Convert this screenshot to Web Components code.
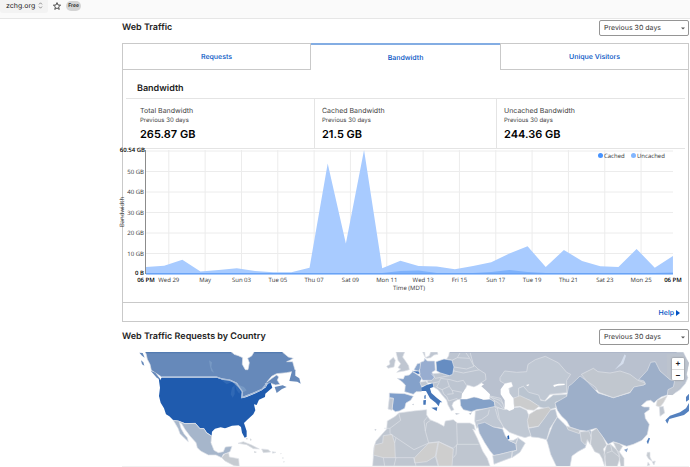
<!DOCTYPE html>
<html lang="en">
<head>
<meta charset="utf-8">
<title>Web Traffic</title>
<style>
	body {
		margin: 0;
		background: #fff;
		color: #222;
		font-family: Inter, "Liberation Sans", sans-serif;
		font-size: 7px;
		text-rendering: geometricPrecision;
	}
</style>
</head>
<body>
<zone-bar plan="Free">zchg.org</zone-bar>
<traffic-page>
	<section-head label="Traffic period">Web Traffic</section-head>
	<tab-panel>
		<tab-button slot="tabs">Requests</tab-button>
		<tab-button slot="tabs" active>Bandwidth</tab-button>
		<tab-button slot="tabs">Unique Visitors</tab-button>
		<stat-row heading="Bandwidth">
			<stat-cell value="265.87 GB">Total Bandwidth</stat-cell>
			<stat-cell value="21.5 GB">Cached Bandwidth</stat-cell>
			<stat-cell value="244.36 GB">Uncached Bandwidth</stat-cell>
		</stat-row>
		<bandwidth-chart></bandwidth-chart>
		<help-link slot="footer">Help</help-link>
	</tab-panel>
	<section-head label="Country period">Web Traffic Requests by Country</section-head>
	<country-map></country-map>
</traffic-page>

<script>
function define(name, html, setup) {
	const template = document.createElement('template')
	template.innerHTML = html

	customElements.define(name, class extends HTMLElement {
		constructor() {
			super()
			this.attachShadow({ mode: 'open' })
			this.shadowRoot.appendChild(template.content.cloneNode(true))
		}

		connectedCallback() {
			if (setup) setup(this, this.shadowRoot)
		}
	})
}

define('zone-bar', `
	<style>
		:host {
			display: flex;
			align-items: flex-start;
			height: 18px;
			background: #fafafa;
			border-bottom: 1px solid #e6e6e6;
		}
		button {
			display: flex;
			align-items: center;
			gap: 3px;
			height: 13px;
			padding: 0 5px 2px 6px;
			border: 0;
			border-radius: 0 0 3px 3px;
			background: #f3f3f3;
			color: #222;
			font: 7px/10px Inter, sans-serif;
			text-rendering: inherit;
		}
		.caret { width: 5px; height: 7px; }
		.star { width: 8px; height: 8px; margin: 2px 5px; }
		.plan {
			margin-top: 1px;
			padding: 0 2px;
			border-radius: 5px;
			background: #d4d4d4;
			font-size: 5px;
			font-weight: 600;
			line-height: 10px;
		}
	</style>
	<button type="button">
		<slot></slot>
		<svg class="caret" viewBox="0 0 5 7" fill="none" stroke="#777" stroke-width=".8"><path d="M1 2.4 2.5 .8 4 2.4M1 4.6 2.5 6.2 4 4.6"/></svg>
	</button>
	<svg class="star" viewBox="0 0 16 16" fill="none" stroke="#333" stroke-width="1.7" stroke-linejoin="round"><path d="M8 1.2 10 6l5.2.4-4 3.4 1.3 5L8 12l-4.5 2.8 1.3-5-4-3.4L6 6z"/></svg>
	<span class="plan"></span>
`, (host, root) => {
	root.querySelector('.plan').textContent = host.getAttribute('plan')
})

define('traffic-page', `
	<style>
		:host {
			display: block;
			margin: 0 1px 0 122px;
		}
	</style>
	<slot></slot>
`)

define('section-head', `
	<style>
		:host {
			display: flex;
			align-items: center;
			justify-content: space-between;
			padding: 1px 0 7px;
		}
		h2 {
			margin: 0;
			font-size: 9px;
			font-weight: 600;
			line-height: 12px;
		}
		.picker { display: grid; align-items: center; }
		select, svg { grid-area: 1 / 1; }
		select {
			appearance: none;
			width: 90px;
			height: 16px;
			padding: 0 4px;
			border: 1px solid #959595;
			border-radius: 2px;
			background: #fff;
			color: #333;
			font: 7px/14px Inter, sans-serif;
			text-rendering: inherit;
		}
		svg {
			justify-self: end;
			width: 4px;
			height: 3px;
			margin-right: 4px;
			pointer-events: none;
		}
	</style>
	<h2><slot></slot></h2>
	<div class="picker">
		<select><option>Previous 30 days</option></select>
		<svg viewBox="0 0 4 3" fill="#555"><path d="M0 .4h4L2 2.6z"/></svg>
	</div>
`, (host, root) => {
	root.querySelector('select').setAttribute('aria-label', host.getAttribute('label'))
})

define('tab-panel', `
	<style>
		:host {
			display: block;
			margin-bottom: 6px;
			border: 1px solid #c9c9c9;
			border-top: 0;
		}
		nav {
			display: grid;
			grid-template-columns: repeat(3, 1fr);
			margin: 0 -1px;
		}
		footer {
			display: flex;
			justify-content: flex-end;
			padding: 4px 8px 3px;
			border-top: 1px solid #c9c9c9;
		}
	</style>
	<nav><slot name="tabs"></slot></nav>
	<slot></slot>
	<footer><slot name="footer"></slot></footer>
`)

define('tab-button', `
	<style>
		:host { display: block; }
		button {
			box-sizing: border-box;
			width: 100%;
			height: 27px;
			border: 1px solid #c9c9c9;
			background: #fff;
			color: #0051c3;
			font: 500 7px/10px Inter, sans-serif;
			text-rendering: inherit;
		}
		:host([active]) button {
			border-width: 2px 0 0;
			border-top-color: #83ade3;
		}
	</style>
	<button type="button"><slot></slot></button>
`)

define('stat-row', `
	<style>
		:host { display: block; padding: 12px 3px 0; }
		h3 {
			margin: 0;
			padding: 0 11px 3px;
			font-size: 9px;
			font-weight: 600;
			line-height: 13px;
		}
		.cells {
			display: grid;
			grid-template-columns: 188fr 182fr 189fr;
			border: 1px solid #e4e4e4;
			border-width: 1px 0;
		}
	</style>
	<h3></h3>
	<div class="cells"><slot></slot></div>
`, (host, root) => {
	root.querySelector('h3').textContent = host.getAttribute('heading')
})

define('stat-cell', `
	<style>
		:host {
			display: block;
			padding: 7px 7px 6px;
			border-left: 1px solid #e4e4e4;
			color: #444;
		}
		:host(:first-child) { padding-left: 14px; border-left: 0; }
		p { margin: 0; line-height: 10px; }
		.period { font-size: 6px; }
		.value {
			color: #000;
			font-size: 11px;
			font-weight: 600;
			line-height: 16px;
		}
	</style>
	<p><slot></slot></p>
	<p class="period">Previous 30 days</p>
	<p class="value"></p>
`, (host, root) => {
	root.querySelector('.value').textContent = host.getAttribute('value')
})

define('help-link', `
	<style>
		:host { display: block; }
		a {
			display: flex;
			align-items: center;
			gap: 2px;
			color: #0051c3;
			font-size: 7px;
			font-weight: 500;
			line-height: 11px;
			text-decoration: none;
		}
		svg { width: 4px; height: 6px; }
	</style>
	<a href="#help"><slot></slot><svg viewBox="0 0 4 6" fill="#0051c3"><path d="M0 0 4 3 0 6z"/></svg></a>
`)

define('bandwidth-chart', `
	<style>
		:host { display: block; }
		svg { display: block; width: 100%; overflow: visible; }
		text {
			fill: #333;
			font: 6px "Open Sans", sans-serif;
			text-anchor: middle;
		}
		.y text { text-anchor: end; }
		.bold, .y .bold { fill: #000; font-weight: 600; }
		.legend text { text-anchor: start; }
	</style>
	<svg viewBox="123 149 565 153" role="img" aria-label="Bandwidth over time">
		<path class="grid" stroke="#ececec" fill="none"/>
		<path class="uncached" fill="#a8cbff"/>
		<path class="cached" fill="#7fb2fb"/>
		<path d="M146 273.500H673" stroke="#69a3f5"/>
		<path d="M145.500 150V274" stroke="#8c8c8c"/>
		<g class="y"></g>
		<g class="x"></g>
		<text x="409" y="290">Time (MDT)</text>
		<text transform="translate(124 212) rotate(-90)">Bandwidth</text>
		<g class="legend">
			<circle cx="600.500" cy="155.500" r="2.500" fill="#4693ff"/>
			<text x="604" y="158">Cached</text>
			<circle cx="633.500" cy="155.500" r="2.500" fill="#82b6ff"/>
			<text x="637" y="158">Uncached</text>
		</g>
	</svg>
`, (host, root) => {
	// one point per day, as heights in the drawing
	const total = [267, 265.8, 259.8, 271.5, 270, 268.3, 271, 272.3, 272.3, 267.7, 163.5, 243.5, 150, 268.3, 260.7,
		266, 266.5, 269.3, 266, 262.3, 253.5, 246.3, 267, 250, 261, 266.3, 267, 249, 267.7, 256]
	const cached = total.map(() => 273)
	cached[14] = 271
	cached[15] = 270.5
	cached[19] = 272
	cached[20] = 270
	cached[21] = 272
	cached[29] = 272.5

	const area = (points) => 'M146 274.5' + points.map((y, i) => `L${146 + i * 18.17} ${y}`).join('') + 'V274.5z'
	root.querySelector('.uncached').setAttribute('d', area(total))
	root.querySelector('.cached').setAttribute('d', area(cached))

	const days = ['Wed 29', 'May', 'Sun 03', 'Tue 05', 'Thu 07', 'Sat 09', 'Mon 11', 'Wed 13', 'Fri 15', 'Sun 17',
		'Tue 19', 'Thu 21', 'Sat 23', 'Mon 25']
	let grid = 'M146 151H673'
	let x = '<text class="bold" x="146" y="282">06 PM</text><text class="bold" x="673" y="282">06 PM</text>'
	days.forEach((day, i) => {
		const left = 168.8 + i * 36.33
		grid += `M${left} 150V274`
		x += `<text x="${left}" y="282">${day}</text>`
	})

	let y = '<text class="bold" x="145" y="152">60.54 GB</text><text class="bold" x="144" y="275">0 B</text>'
	for (let gb = 10; gb <= 50; gb += 10) {
		const top = 274 - gb * 2.05
		grid += `M146 ${top}H673`
		y += `<text x="144" y="${top + 2}">${gb} GB</text>`
	}
	root.querySelector('.grid').setAttribute('d', grid)
	root.querySelector('.x').innerHTML = x
	root.querySelector('.y').innerHTML = y
})

define('country-map', `
	<style>
		:host {
			display: block;
			position: relative;
			border-bottom: 1px solid #f0f0f0;
		}
		.map { display: block; width: 100%; }
		.zoom {
			position: absolute;
			top: 6px;
			right: 5px;
			display: grid;
			background: #fff;
			border-radius: 1px;
			box-shadow: 0 0 2px #777;
		}
		button {
			width: 12px;
			height: 11px;
			padding: 0;
			border: 0;
			background: none;
			color: #222;
			font: 700 8px/11px Inter, sans-serif;
		}
		button + button { border-top: 1px solid #ddd; }
	</style>
	<svg class="map" viewBox="122 351 567 114" role="img" aria-label="Requests by country">
		<g stroke="#dfe3e9" stroke-width="2" stroke-linejoin="round">
			<!-- North America -->
			<g transform="translate(110 320) scale(.3333)">
				<path fill="#6689ba" d="M107 93H365L372 100 385 104 398 110 397 130 406 146 414 146 418 125 413 112 425 105 432 93H517L535 108 550 112 540 118 530 122 548 122 556 150 530 155 500 158 485 166 470 184 486 172 500 162 506 168 502 178 510 190 497 192 480 186 466 188 470 196 455 205 425 218 395 230 398 212 380 186 360 177 335 173 320 168H155L140 158 124 148 120 130 112 115z"/>
				<path fill="#6689ba" stroke="none" d="M88 95 98 96 104 110 96 104zM93 118 100 124 103 134 96 130zM122 149 136 155 154 178 140 170zM538 180 546 150 556 146 556 164 568 172 572 188 562 182zM494 198 518 193 530 198 516 204 500 216z"/>
				<path fill="#1f5bae" stroke="none" d="M146 172 152 178 154 170H320L335 175 362 179 380 188 396 212 394 232 408 229 430 220 455 208 468 199 473 188 482 185 487 200 478 208 466 218 465 228 447 236 440 252 432 250 436 268 430 280 412 296 402 306 410 330 410 347 404 350 396 335 393 318 386 313 366 314 350 320 345 322 332 319 315 323 306 332 305 344 290 334 282 322 270 322 256 306 225 307 205 299 190 298 178 286 168 280 162 262 152 245 147 225 150 200z"/>
				<path fill="#2f68b5" stroke="none" d="M335 178 355 176 366 183 350 190zM366 200 374 192 374 220 368 230 362 220zM375 192 394 204 388 218 380 208z"/>
				<path fill="#7799c4" stroke="none" d="M297 118 306 124 304 138 312 155 304 150 300 136zM370 186 382 190 402 198 410 208 400 214 388 202z"/>
				<path stroke="#4872ae" stroke-width="3" d="M107 95H363M433 95H517"/>
				<path stroke="#a9bedb" stroke-width="4" fill="none" d="M156 168H320L335 174 360 178 380 187 397 212 396 230 425 219 455 206 468 190 473 188"/>
				<path fill="#a6b6cb" d="M190 298 205 300 225 308 256 307 270 323 282 323 290 336 305 345 303 365 312 388 325 395 340 392 346 378 366 376 360 392 350 397 340 400 335 410 318 402 295 402 272 390 262 380 258 365 240 345 225 325 215 308 208 304 213 322 222 338 232 350 235 362 222 350 210 338 204 322z"/>
				<path fill="#c6cbd1" d="M335 410 345 398 356 396 358 408 386 413 388 436 372 434 345 420zM384 367 400 362 425 372 448 384 430 383 410 371zM455 384 475 386 482 393 460 395zM487 392 498 394 488 397z"/>
				<path fill="#c6cbd1" stroke="none" d="M408 350 413 352 411 357zM420 352 425 356 422 360zM432 391 441 393 434 396zM512 396 515 398 512 400zM518 408 521 411 518 414zM521 420 524 422 521 425z"/>
			</g>

			<!-- Europe and Africa -->
			<g transform="translate(370 340) scale(.3333)">
				<path fill="#bdc5d1" d="M238 33H460V170L400 200 372 176 330 130 312 138 292 132 284 148 284 160 276 174 262 176 250 184 246 194 252 206 244 210 234 192 230 178 216 162 204 146 190 138 188 126 172 126 172 118 186 98 212 96 240 104 252 90 246 58 230 54 236 44z"/>
				<path fill="#bfc6d1" d="M78 33H104L98 48 108 62 116 74 118 86 104 90 80 94 92 84 84 80 92 68 84 58zM58 60 70 49 76 58 72 78 54 82 50 76 60 70zM158 33H164L166 50 178 44 182 33H202L204 40 192 42 182 50 170 52 164 46zM148 124 168 120 174 130 154 137z"/>
				<path fill="#84a1ca" d="M82 112 100 114 104 104 118 102 128 92 140 100 156 110 150 124 156 140 154 152 138 152 130 160 104 152 106 132 96 122z"/>
				<path fill="#7f9eca" d="M58 156 104 158 130 166 122 178 108 186 104 202 88 210 76 212 66 204 70 172 58 170z"/>
				<path fill="#c0c7d2" d="M58 171 70 172 66 208 54 204z"/>
				<path fill="#98add0" d="M152 64 162 60 164 52 172 60 194 60 196 88 186 94 194 108 186 118 158 118 150 104 148 80z"/>
				<path fill="#8aa6cd" d="M132 86 142 68 152 66 150 82 146 92z"/>
				<path fill="#4676bb" d="M126 90 146 90 150 98 144 100z"/>
				<path fill="#668dc2" d="M198 62 222 54 246 58 252 78 248 100 238 104 212 96 200 90z"/>
				<path fill="#4475b8" stroke="none" d="M154 140 170 132 188 127 190 138 180 142 184 156 200 170 217 184 210 184 206 196 198 186 180 172 168 150 154 150zM184 200 202 199 200 210zM160 178 168 177 167 191 160 191zM163 164 167 161 167 173 163 173z"/>
				<path fill="none" d="M184 98 196 112 218 108 238 104M188 126 208 122 212 112 240 116 262 122 280 118M208 124 200 138 216 146 238 136 232 118M216 146 222 160 230 166 236 180M238 136 246 148 276 154M232 160 250 158 246 148M236 180 262 172M246 58 262 50 270 36M252 78 290 84 312 76 298 50 286 33M252 90 280 96 330 86M280 118 290 134M262 50 298 52"/>
				<path fill="#84a1c8" d="M270 174 290 174 312 168 345 175 372 174 376 200 320 206 304 212 280 206 272 194z"/>
				<path fill="#bfc6d0" d="M86 216 130 210 170 206 170 222 180 236 204 246 222 256 226 240 250 236 262 246 300 246 312 252 316 268 308 264 322 292 338 330 352 352 360 375H8L12 318 18 300 34 282 50 264 52 240 76 226z"/>
				<path fill="#cecece" d="M14 312 38 306 40 284 66 280 74 306 76 350 40 350 10 342zM132 352 176 306 204 304 196 346 170 362 134 366zM206 302 250 324 246 375H206L198 346z"/>
				<path fill="none" d="M86 216 92 238 60 262 60 278 132 326 176 306 166 270 162 240 172 228M166 270 170 246 182 238M176 306 206 302 250 322 262 310 260 246M262 310H326M60 262H42M74 306 78 290M74 350 132 350M40 350 44 375M132 350 138 375M260 310 258 340 250 350M196 346 204 375M78 350 72 375"/>
				<path fill="#bfc6d0" stroke="none" d="M256 216 270 218 258 221zM296 218 306 214 302 221zM126 190 132 188 130 193zM14 264 20 266 15 269z"/>
			</g>

			<!-- Russia, Central Asia, Middle East -->
			<g transform="translate(470 340) scale(.3333)">
				<path fill="#b9c1cf" d="M0 33H640L656 66 650 100 654 110 646 128 630 146 606 162 590 150 510 130 360 150 290 155 240 160 100 200 60 174 44 150 16 142 26 130 48 116 46 98 24 84 10 70z"/>
				<path stroke="#aab4c7" stroke-width="3" d="M-60 34H620"/>
				<path fill="#bfc7d3" d="M16 210 76 196 100 206 104 250 98 262 70 258 44 246 20 262 14 240zM56 164 92 172 98 186 104 206 76 200 72 176z"/>
				<path fill="none" d="M18 240 34 236 54 222 58 206M76 204 84 232 100 256M60 168 90 178 100 190M72 178 86 186 98 200"/>
				<path fill="#c0c8d3" d="M90 110 104 90 140 94 170 92 174 70 196 56 226 46 266 66 290 94 302 100 290 118 290 155 240 160 224 180 200 172 175 156 160 136 146 142 146 172 118 170 118 142 128 136 124 124 104 128 90 120z"/>
				<path fill="#bac4d0" d="M146 142 160 136 176 154 206 162 212 178 226 180 250 162 292 160 286 174 256 184 258 200 238 206 208 198 180 178 146 172z"/>
				<path fill="#cbcccd" d="M130 172 150 164 180 178 208 196 192 208 172 206 150 196 132 198z"/>
				<path fill="#c0c8d3" d="M82 200 104 206 132 200 150 198 170 208 176 222 174 258 184 284 165 290 145 284 118 274 100 258 88 234z"/>
				<path fill="#b8c2d0" d="M176 262 205 256 238 208 256 204 262 228 240 262 230 296 206 290 184 288z"/>
				<path fill="#c9cacb" d="M178 220 200 206 236 198 242 206 222 234 205 256 176 260 172 238z"/>
				<path fill="#b2becf" d="M230 298 248 252 262 228 280 246 296 262 330 276 360 264 366 276 352 300 346 320 324 332 306 345 300 378H260L242 340 234 310z"/>
				<path fill="#c4c9d0" d="M290 256 330 268 328 278 294 266z"/>
				<path fill="#9fb1cb" d="M22 250 44 244 70 258 98 264 106 284 116 298 138 308 140 328 90 340 72 344 60 330 44 305 28 276z"/>
				<path fill="#bcc6d3" d="M68 344 90 340 128 330 124 350 92 362 72 370zM140 328 138 308 144 290 166 306 150 334 126 350 126 332zM116 298 130 298 144 290 138 308z"/>
				<path fill="#1f5bae" stroke="none" d="M112 285 117 283 118 294 113 295z"/>
				<path fill="#fff" stroke="none" d="M92 145 104 128 124 124 128 136 116 142 118 156 130 172 132 204 118 210 104 200 104 178 92 160zM-26 174-24 158-14 144 0 142 12 140 22 134 34 126 42 130 34 136 46 146 60 160 58 174 40 176 14 166-10 173zM250 132 266 128 284 128 284 132 262 134 252 138zM168 132 178 130 174 136z"/>
			</g>

			<!-- East Asia -->
			<g transform="translate(580 320) scale(.3333)">
				<path fill="#bcc3ce" stroke="none" d="M260 100H310L327 126 318 168 300 198 278 222 262 222z"/>
				<path fill="#9dafc9" d="M-75 246-40 226-34 195-26 190-10 175 0 165 20 180 54 216 100 230 150 215 162 196 196 190 192 180 176 176 202 148 212 124 226 122 240 150 270 176 284 180 280 198 264 206 262 222 244 228 230 238 222 246 212 238 200 240 184 254 192 258 208 258 208 266 194 276 196 292 208 310 202 340 186 358 160 370 140 376 118 368 100 362 84 370 70 350 48 322 20 330 0 328-30 318-40 300-56 285-68 268z"/>
				<path fill="#c1c7cf" d="M4 160 40 142 54 152 90 156 120 150 150 160 174 178 196 186 192 192 162 198 150 214 100 230 56 214 46 198 20 180z"/>
				<path fill="#d5deed" stroke="none" d="M134 100 138 104 130 128 104 146 122 126z"/>
				<path fill="#cfcfcf" d="M232 238 262 224 250 246 240 258 228 254z"/>
				<path fill="#bfc6d0" d="M238 258 250 256 254 276 240 286z"/>
				<path fill="#5481bf" stroke="none" d="M327 218 318 228 318 242 327 236zM327 246 318 262 300 274 270 284 256 298 262 308 268 294 290 288 312 282 327 270zM206 350 210 352 204 370 200 362z"/>
				<path fill="#c1c7cf" d="M0 332 28 332 34 350 30 370 22 356 16 372 4 360zM34 332 50 322 70 350 80 372 70 384 76 404 74 436 66 412 58 398 44 392 32 370zM80 372 92 370 116 392 120 410 112 436H78L72 400zM100 364 118 368 128 376 118 392 132 412 132 436H122L116 400z"/>
				<path fill="none" d="M80 396 96 390 118 408M96 390 92 372"/>
				<path fill="#8ba6cc" stroke="none" d="M132 386 144 382 140 394z"/>
				<path fill="#c6cbd1" d="M202 394 210 394 210 408 216 420 206 414 200 404zM216 422 226 420 222 432zM204 424 210 432 202 434z"/>
			</g>
		</g>
	</svg>
	<div class="zoom">
		<button type="button" aria-label="Zoom in">+</button>
		<button type="button" aria-label="Zoom out">−</button>
	</div>
`)
</script>
</body>
</html>
